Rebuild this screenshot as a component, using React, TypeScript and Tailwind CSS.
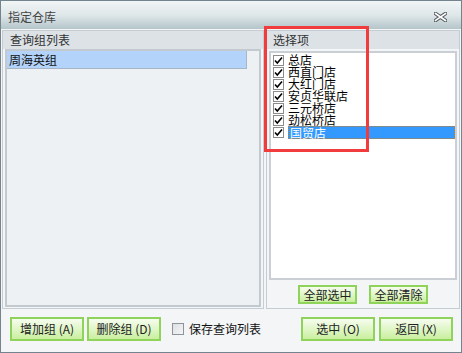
import React from "react";

const stores = ["总店", "西直门店", "大红门店", "安贞华联店", "三元桥店", "劲松桥店", "国贸店"];

const greenBtn =
  "flex items-center justify-center border-2 border-[#8fd35a] bg-gradient-to-b from-[#f7fcef] to-[#c9ef9e] text-[12px] text-[#222] leading-none";

const Check = () => (
  <div className="w-[11px] h-[11px] border border-[#8c8c8c] bg-white flex items-center justify-center shrink-0">
    <svg width="9" height="9" viewBox="0 0 9 9">
      <path d="M1 4.5 L3.3 7 L8 1.5" stroke="#000" strokeWidth="1.6" fill="none" />
    </svg>
  </div>
);

const App = () => {
  return (
    <div
      className="relative w-[462px] h-[353px] bg-[#f3f5f7] border border-[#74848e] flex flex-col overflow-hidden"
      style={{ fontFamily: '"Noto Sans CJK SC", "Noto Sans", sans-serif' }}
    >
      {/* title bar */}
      <div className="h-[28px] shrink-0 flex items-center justify-between pl-[7px] pr-[14px] bg-gradient-to-b from-[#f1f5f6] via-[#dfe7e9] to-[#b4c5ca]">
        <span className="text-[12px] text-[#444] mt-[4px]">指定仓库</span>
        <svg width="13" height="10" viewBox="0 0 13 10" className="mt-[4px]">
          <path d="M1.5 1.5 L11.5 8.5 M11.5 1.5 L1.5 8.5" stroke="#555c60" strokeWidth="3.6" strokeLinecap="square" />
          <path d="M1.5 1.5 L11.5 8.5 M11.5 1.5 L1.5 8.5" stroke="#fff" strokeWidth="1.6" strokeLinecap="square" />
        </svg>
      </div>

      {/* panels */}
      <div className="flex gap-[2px] px-[1px] pt-[1px] h-[280px]">
        <div className="w-[262px] flex flex-col border border-[#c5ccd2] bg-[#f3f5f7]">
          <div className="h-[18px] bg-[#dde2e7] text-[12px] text-[#333] pl-[7px] leading-[18px]">查询组列表</div>
          <div className="flex-1 mx-[2px] mb-[1px] border-2 border-[#c2c9cf] bg-[#eef1f4]">
            <div className="w-[240px] h-[18px] bg-[#b3d3fb] border-r border-b border-[#a6b6c6] text-[12px] text-[#111] leading-[17px] pl-[2px]">
              周海英组
            </div>
          </div>
        </div>

        <div className="flex-1 flex flex-col border border-[#c5ccd2] bg-[#f3f5f7]">
          <div className="h-[18px] bg-[#dde2e7] text-[12px] text-[#333] pl-[6px] leading-[18px]">选择项</div>
          <div className="h-[229px] mx-[2px] mt-[2px] border-2 border-[#c9cfd4] bg-white pt-[1px] pl-[1px]">
            {stores.map((s, i) => (
              <div key={s} className="h-[12px] flex items-center gap-[4px] pl-[1px]">
                <Check />
                <span
                  className={
                    i === stores.length - 1
                      ? "flex-1 h-[13px] bg-[#3399ff] text-white text-[12px] leading-[12px] border border-dotted border-[#c97a1a] pl-[1px]"
                      : "text-[12px] leading-[12px] text-black"
                  }
                >
                  {s}
                </span>
              </div>
            ))}
          </div>
          <div className="flex-1 flex items-center justify-center gap-[12px] pt-[1px]">
            <button className={`${greenBtn} w-[59px] h-[19px]`}>全部选中</button>
            <button className={`${greenBtn} w-[59px] h-[19px]`}>全部清除</button>
          </div>
        </div>
      </div>

      {/* bottom bar */}
      <div className="flex items-center pl-[9px] pr-[8px] mt-[8px]">
        <button className={`${greenBtn} w-[74px] h-[24px]`}>增加组 (A)</button>
        <button className={`${greenBtn} w-[74px] h-[24px] ml-[3px]`}>删除组 (D)</button>
        <div className="flex items-center ml-[11px] gap-[5px]">
          <div className="w-[12px] h-[12px] border border-[#8e9499] bg-gradient-to-br from-[#dde0e3] to-[#f4f5f6]" />
          <span className="text-[12px] text-[#111]">保存查询列表</span>
        </div>
        <button className={`${greenBtn} w-[74px] h-[24px] ml-auto`}>选中 (O)</button>
        <button className={`${greenBtn} w-[74px] h-[24px] ml-[4px]`}>返回 (X)</button>
      </div>

      {/* red annotation box */}
      <div className="absolute left-[263px] top-[25px] w-[105px] h-[126px] border-[3px] border-[#f03c3c]" />
    </div>
  );
};

export default App;
